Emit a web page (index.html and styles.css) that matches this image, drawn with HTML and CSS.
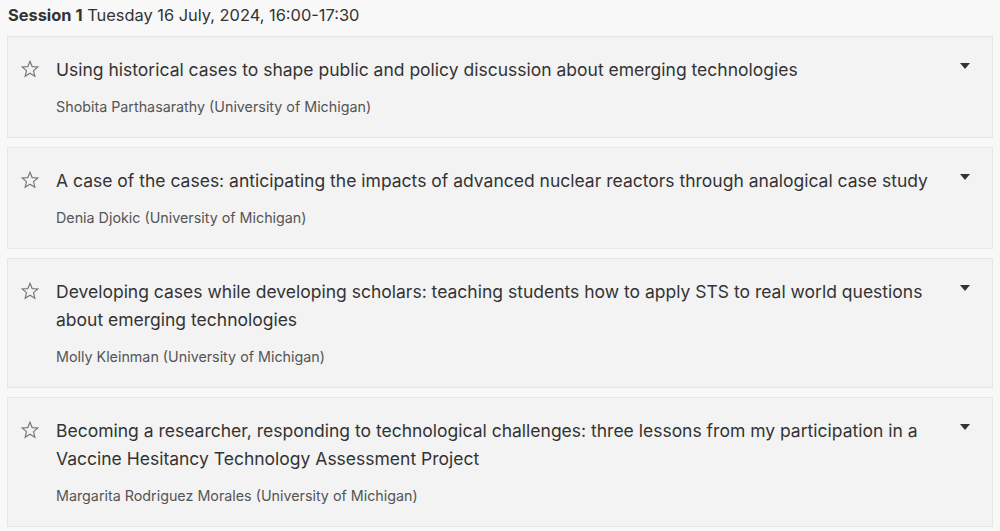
FILE: index.html
```html
<!DOCTYPE html>
<html lang="en">
<head>
    <meta charset="UTF-8">
    <meta name="viewport" content="width=device-width, initial-scale=1.0">
    <title>Session 1</title>
    <link rel="stylesheet" href="styles.css">
</head>

<body>
    <div class="session">
        <!-- Session heading -->
        <h2 class="session-title"><strong>Session 1</strong> Tuesday 16 July, 2024, 16:00-17:30</h2>

        <!-- Talks in this session -->
        <div class="talk">
            <svg class="star" viewBox="0 0 24 24"><path d="M12 2.8l2.6 6.3 6.8.5-5.2 4.4 1.6 6.6L12 17l-5.8 3.6 1.6-6.6-5.2-4.4 6.8-.5z"/></svg>
            <div class="talk-body">
                <div class="talk-title">Using historical cases to shape public and policy discussion about emerging technologies</div>
                <div class="talk-author">Shobita Parthasarathy (University of Michigan)</div>
            </div>
            <span class="caret"></span>
        </div>

        <div class="talk">
            <svg class="star" viewBox="0 0 24 24"><path d="M12 2.8l2.6 6.3 6.8.5-5.2 4.4 1.6 6.6L12 17l-5.8 3.6 1.6-6.6-5.2-4.4 6.8-.5z"/></svg>
            <div class="talk-body">
                <div class="talk-title">A case of the cases: anticipating the impacts of advanced nuclear reactors through analogical case study</div>
                <div class="talk-author">Denia Djokic (University of Michigan)</div>
            </div>
            <span class="caret"></span>
        </div>

        <div class="talk">
            <svg class="star" viewBox="0 0 24 24"><path d="M12 2.8l2.6 6.3 6.8.5-5.2 4.4 1.6 6.6L12 17l-5.8 3.6 1.6-6.6-5.2-4.4 6.8-.5z"/></svg>
            <div class="talk-body">
                <div class="talk-title">Developing cases while developing scholars: teaching students how to apply STS to real world questions about emerging technologies</div>
                <div class="talk-author">Molly Kleinman (University of Michigan)</div>
            </div>
            <span class="caret"></span>
        </div>

        <div class="talk">
            <svg class="star" viewBox="0 0 24 24"><path d="M12 2.8l2.6 6.3 6.8.5-5.2 4.4 1.6 6.6L12 17l-5.8 3.6 1.6-6.6-5.2-4.4 6.8-.5z"/></svg>
            <div class="talk-body">
                <div class="talk-title">Becoming a researcher, responding to technological challenges: three lessons from my participation in a Vaccine Hesitancy Technology Assessment Project</div>
                <div class="talk-author">Margarita Rodriguez Morales (University of Michigan)</div>
            </div>
            <span class="caret"></span>
        </div>
    </div>
</body>
</html>
```

FILE: styles.css
```css
/* styles.css */
body {
    font-family: Inter, "Noto Sans", sans-serif;
    margin: 0;
    padding: 0;
    background-color: #f8f8f8;
    color: #333;
}

.session {
    padding: 6px 7px 0 7px;
}

.session-title {
    font-size: 16.4px;
    font-weight: normal;
    line-height: 18px;
    margin: 0 0 12px 1px;
    color: #333;
}

.session-title strong {
    font-weight: 700;
}

.talk {
    display: flex;
    align-items: flex-start;
    background-color: #f3f3f3;
    border: 1px solid #e6e6e6;
    padding: 19px 22px 20px 12px;
    margin-bottom: 9px;
}

.star {
    width: 20px;
    height: 20px;
    margin: 3px 16px 0 0;
    fill: none;
    stroke: #777;
    stroke-width: 1.4;
    stroke-linejoin: miter;
    flex-shrink: 0;
}

.talk-body {
    flex: 1;
}

.talk-title {
    font-size: 17.5px;
    line-height: 28px;
    color: #333;
}

.talk-author {
    font-size: 14.3px;
    line-height: 20px;
    color: #555;
    margin-top: 13px;
}

.caret {
    width: 0;
    height: 0;
    border-left: 5px solid transparent;
    border-right: 5px solid transparent;
    border-top: 6px solid #333;
    margin: 7px 0 0 30px;
    flex-shrink: 0;
}
```
